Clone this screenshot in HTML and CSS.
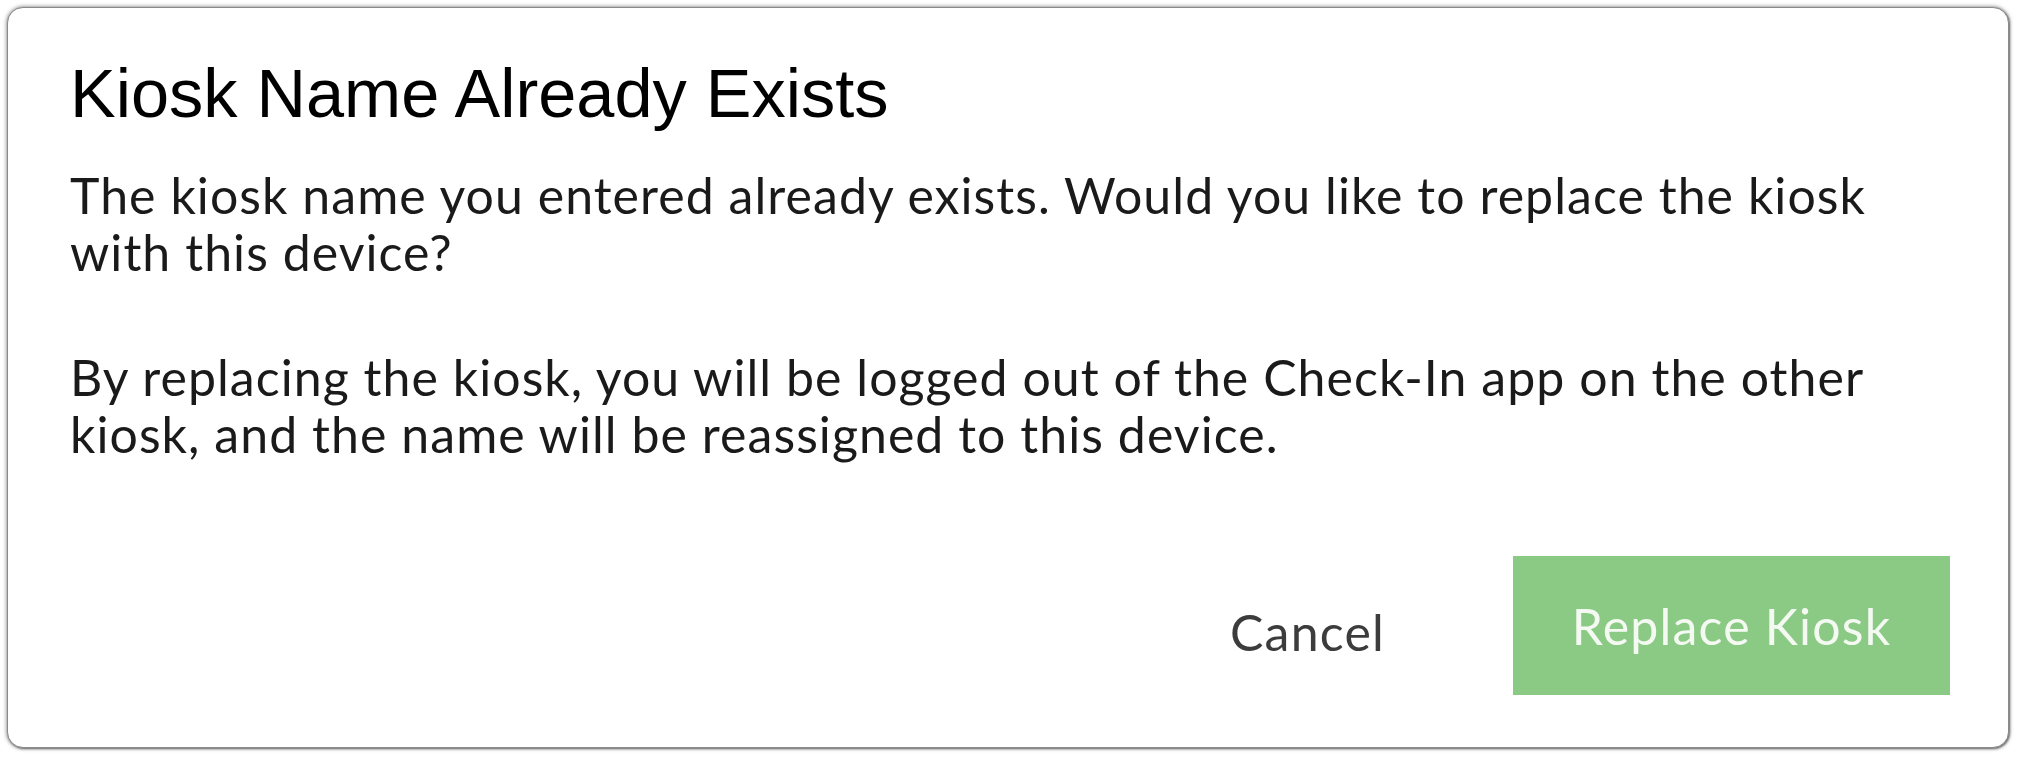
FILE: index.html
```html
<!DOCTYPE html>
<html lang="en">
<head>
  <link rel="stylesheet" href="styles.css">
</head>
<body>
  <div class="page">
    <div class="dialog">
      <h1 class="dialog-title">Kiosk Name Already Exists</h1>
      <p class="dialog-text">The kiosk name you entered already exists. Would you like to replace the kiosk with this device?</p>
      <p class="dialog-text second">By replacing the kiosk, you will be logged out of the Check-In app on the other kiosk, and the name will be reassigned to this device.</p>
      <div class="dialog-actions">
        <button class="btn-cancel">Cancel</button>
        <button class="btn-replace">Replace Kiosk</button>
      </div>
    </div>
  </div>
</body>
</html>
```

FILE: styles.css
```css
body {
    margin: 0;
    padding: 0;
    background: #fff;
}
.page {
    padding: 7px 8px 9px 7px;
}
.dialog {
    height: 741px;
    box-sizing: border-box;
    display: flex;
    flex-direction: column;
    background: #fff;
    border: 1px solid #8a8a8a;
    border-radius: 16px;
    box-shadow: 0 0 4px rgba(0, 0, 0, 0.55), 1px 1px 2px rgba(0, 0, 0, 0.4);
    padding: 52px 58px 52px 62px;
}
.dialog-title {
    margin: 0;
    font-family: "Liberation Sans", Arial, sans-serif;
    font-weight: normal;
    font-size: 68.5px;
    line-height: 68px;
    color: #000;
}
.dialog-text {
    margin: 39px 0 0 0;
    font-family: Lato, sans-serif;
    font-size: 50px;
    letter-spacing: 1.05px;
    line-height: 57px;
    color: #1a1a1a;
    max-width: 1830px;
}
.dialog-text.second {
    margin-top: 68px;
}
.dialog-actions {
    margin-top: auto;
    display: flex;
    justify-content: flex-end;
    align-items: center;
    gap: 128px;
}
.btn-cancel {
    border: none;
    background: none;
    padding: 12px 0 0 0;
    font-family: Lato, sans-serif;
    font-size: 50px;
    letter-spacing: 1.2px;
    color: #3c3c3c;
}
.btn-replace {
    border: none;
    width: 437px;
    height: 139px;
    padding: 0;
    background: #8aca85;
    font-family: Lato, sans-serif;
    font-size: 50px;
    letter-spacing: 1.2px;
    color: #f4faf2;
}
```
